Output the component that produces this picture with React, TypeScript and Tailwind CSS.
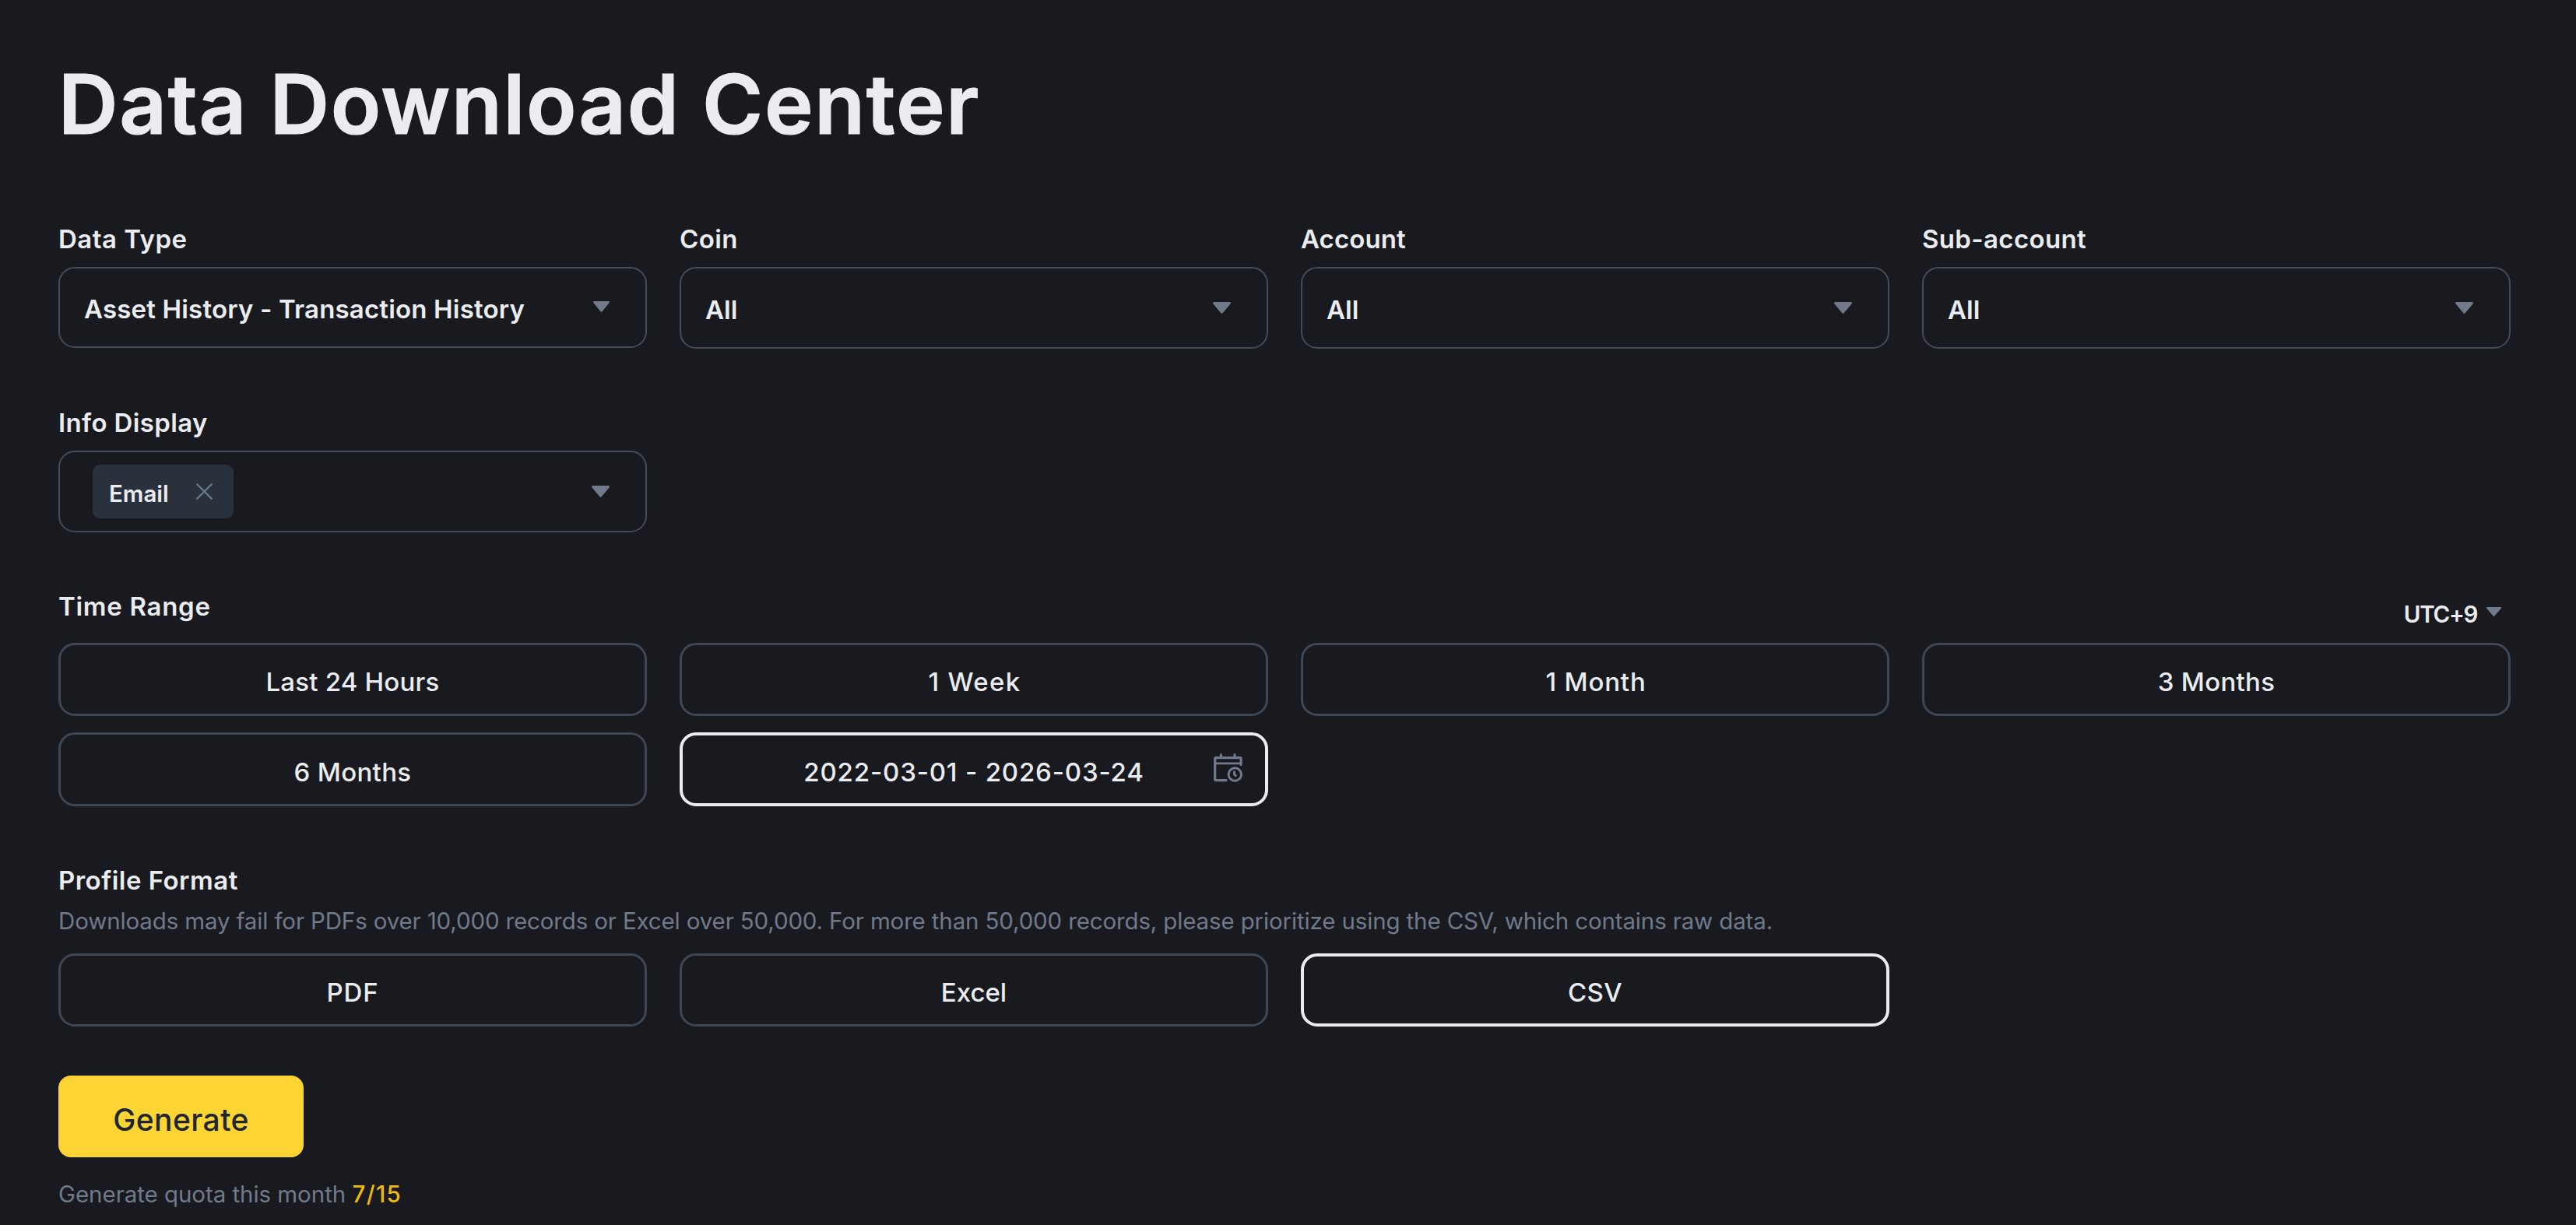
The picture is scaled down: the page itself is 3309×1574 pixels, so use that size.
import React, { useState } from 'react';
import clsx from 'clsx';

interface SelectFieldProps {
  label: string;
  labelClass?: string;
  boxClass?: string;
  arrowClass?: string;
  children: React.ReactNode;
}

interface OptionButtonProps {
  label: string;
  active: boolean;
  onClick: () => void;
  className?: string;
  icon?: React.ReactNode;
}

function CaretDown({ className }: { className?: string }) {
  return (
    <svg viewBox="0 0 23 15" preserveAspectRatio="none" className={clsx('shrink-0 fill-[#707a8a]', className)}>
      <path d="M1.4 0H21.6C22.8 0 23.4 1.5 22.5 2.5L12.4 14.4C11.9 15 11.1 15 10.6 14.4L0.5 2.5C-0.4 1.5 0.2 0 1.4 0Z" />
    </svg>
  );
}

function CalendarClock() {
  return (
    <svg
      viewBox="0 0 37 37"
      fill="none"
      strokeLinecap="round"
      strokeLinejoin="round"
      className="absolute right-[29px] top-[23px] h-[37px] w-[37px] stroke-[#707a8a]"
    >
      <path strokeWidth="3" d="M9.5 1.6V5.5M27 1.6V5.5" />
      <path strokeWidth="3.2" d="M16 34.6H2.2C1.9 34.6 1.7 34.4 1.7 34.1V6.2C1.7 5.9 1.9 5.7 2.2 5.7H34.6C34.9 5.7 35.1 5.9 35.1 6.2V14.4" />
      <path strokeWidth="2.8" d="M2 12.8H35" />
      <circle cx="27.3" cy="27" r="8.2" strokeWidth="3" />
      <path strokeWidth="3" d="M26.5 23.8V26.9L28.3 28.6" />
    </svg>
  );
}

function SelectField({ label, labelClass, boxClass = 'h-[105px] pl-8', arrowClass = 'h-[15px] w-[23px]', children }: SelectFieldProps) {
  return (
    <div className="flex flex-col gap-4">
      <label className={clsx('text-[33px] leading-10 font-semibold', labelClass)}>{label}</label>
      <div className={clsx('flex items-center justify-between rounded-[21px] border-2 border-[#434c5a] pr-[46px]', boxClass)}>
        {children}
        <CaretDown className={arrowClass} />
      </div>
    </div>
  );
}

function OptionButton({ label, active, onClick, className, icon }: OptionButtonProps) {
  return (
    <button
      type="button"
      onClick={onClick}
      className={clsx(
        'relative flex items-center justify-center rounded-[21px] text-[33px] leading-10 font-medium',
        active ? 'border-4 border-[#eaecef]' : 'border-3 border-[#3e4754]',
        className,
      )}
    >
      <span className="pt-[6px]">{label}</span>
      {icon}
    </button>
  );
}

const ranges = [
  { label: 'Last 24 Hours', className: 'h-[94px] tracking-[0.2px]' },
  { label: '1 Week', className: 'h-[94px] pl-[2px] tracking-[1.3px]' },
  { label: '1 Month', className: 'h-[94px] pl-[2px] tracking-[0.8px]' },
  { label: '3 Months', className: 'h-[94px] tracking-[0.3px]' },
  { label: '6 Months', className: 'h-[95px] tracking-[0.3px]' },
  { label: '2022-03-01 - 2026-03-24', className: 'h-[95px] tracking-[0.82px]', icon: <CalendarClock /> },
];

const formats = [
  { label: 'PDF', className: 'h-[94px] tracking-[0.8px]' },
  { label: 'Excel', className: 'h-[94px]' },
  { label: 'CSV', className: 'h-[94px] tracking-[0.4px]' },
];

export default function App() {
  const [range, setRange] = useState('2022-03-01 - 2026-03-24');
  const [format, setFormat] = useState('CSV');
  const [showEmail, setShowEmail] = useState(true);

  return (
    <div className="h-[1574px] w-[3309px] overflow-hidden bg-[#191a1f] pt-[70px] pl-[75px] text-[#eaecef] font-['Inter',sans-serif]">
      <div className="w-[3150px]">
        <h1 className="text-[106px] leading-[128px] font-semibold tracking-[1.7px] [-webkit-text-stroke:1.2px_#eaecef]">
          Data Download Center
        </h1>

        <div className="mt-[89px] grid grid-cols-4 items-start gap-x-[42px]">
          <SelectField
            label="Data Type"
            labelClass="tracking-[0.5px]"
            boxClass="h-[104px] pl-8"
            arrowClass="h-[14px] w-[21px] mb-[2px]"
          >
            <span className="-ml-px pt-[6px] text-[33px] font-semibold tracking-[0.17px]">Asset History - Transaction History</span>
          </SelectField>
          <SelectField label="Coin" labelClass="tracking-[0.4px]">
            <span className="-ml-px pt-[6px] text-[33px] font-semibold">All</span>
          </SelectField>
          <SelectField label="Account" labelClass="tracking-[0.1px]">
            <span className="-ml-px pt-[6px] text-[33px] font-semibold">All</span>
          </SelectField>
          <SelectField label="Sub-account" labelClass="tracking-[0.35px]">
            <span className="-ml-px pt-[6px] text-[33px] font-semibold">All</span>
          </SelectField>
        </div>

        <div className="mt-[75px] grid grid-cols-4 gap-x-[42px]">
          <SelectField label="Info Display" labelClass="tracking-[0.37px]" boxClass="h-[105px] pl-[42px]">
            {showEmail && (
              <div className="flex h-[69px] w-[181px] items-center justify-between rounded-[9px] bg-[#29313d] pr-[27px] pl-[21px]">
                <span className="pt-[5px] text-[29.5px] leading-9 font-semibold">Email</span>
                <button type="button" onClick={() => setShowEmail(false)}>
                  <svg viewBox="0 0 21 21" className="h-[21px] w-[21px] stroke-[#707a8a]" strokeWidth="2.2" strokeLinecap="round">
                    <path d="M1.2 1.2L19.8 19.8M19.8 1.2L1.2 19.8" />
                  </svg>
                </button>
              </div>
            )}
          </SelectField>
        </div>

        <div className="mt-[75px] flex h-[67px] items-start justify-between">
          <span className="text-[33px] leading-10 font-semibold tracking-[0.7px]">Time Range</span>
          <div className="flex items-start gap-[12px] pt-[10px] pr-[12px]">
            <span className="text-[29.5px] leading-10 font-semibold tracking-[-1.3px]">UTC+9</span>
            <CaretDown className="mt-[11px] h-[12px] w-[19px]" />
          </div>
        </div>
        <div className="grid grid-cols-4 gap-x-[42px] gap-y-[21px]">
          {ranges.map((item) => (
            <OptionButton
              key={item.label}
              label={item.label}
              className={item.className}
              icon={item.icon}
              active={range === item.label}
              onClick={() => setRange(item.label)}
            />
          ))}
        </div>

        <div className="mt-[75px] text-[33px] leading-10 font-semibold tracking-[0.48px]">Profile Format</div>
        <p className="mt-[14px] text-[29.5px] leading-9 tracking-[-0.14px] whitespace-nowrap text-[#707a8a]">
          Downloads may fail for PDFs over 10,000 records or Excel over 50,000. For more than 50,000 records, please prioritize using the CSV, which contains raw data.
        </p>
        <div className="mt-[24px] grid grid-cols-4 gap-x-[42px]">
          {formats.map((item) => (
            <OptionButton
              key={item.label}
              label={item.label}
              className={item.className}
              active={format === item.label}
              onClick={() => setFormat(item.label)}
            />
          ))}
        </div>

        <button
          type="button"
          className="mt-[63px] flex h-[105px] w-[315px] items-center justify-center rounded-2xl bg-[#fcd535] pt-[10px] text-[39px] font-medium tracking-[0.4px] text-[#202630]"
        >
          Generate
        </button>
        <p className="mt-[29px] text-[29.5px] leading-9 tracking-[-0.05px] text-[#707a8a]">
          Generate quota this month <span className="font-medium tracking-[1.4px] text-[#f0b90b]">7/15</span>
        </p>
      </div>
    </div>
  );
}
